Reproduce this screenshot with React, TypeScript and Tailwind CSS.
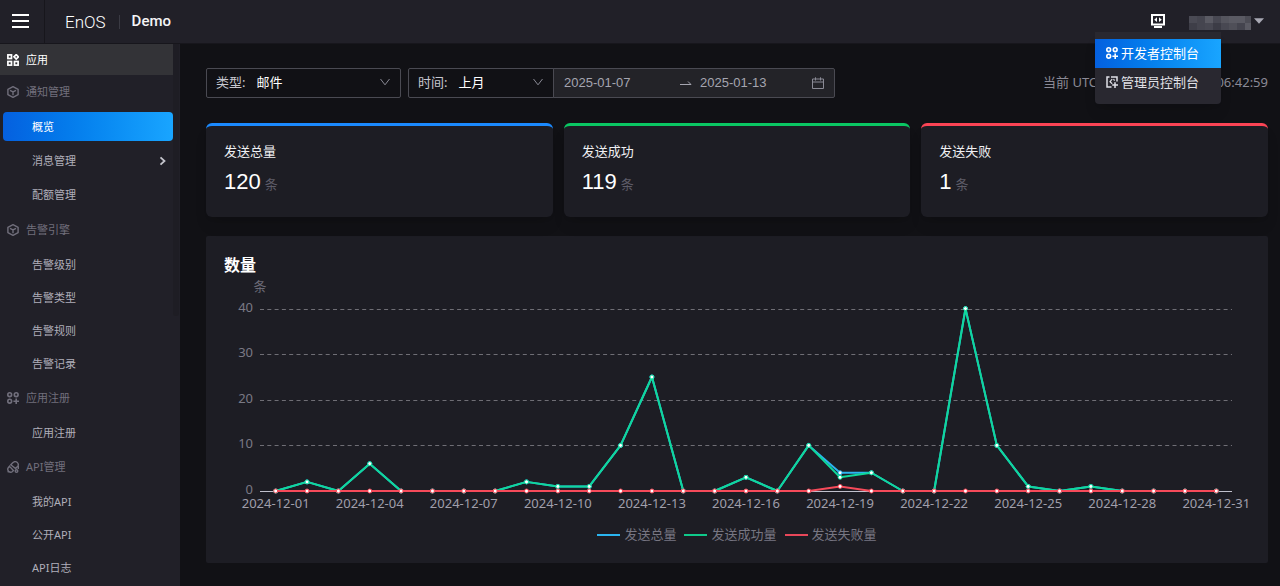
import React from "react";

type IconProps = { className?: string };

const GridIcon = ({ className }: IconProps) => (
  <svg className={className} viewBox="0 0 12 12" fill="none" stroke="currentColor" strokeWidth="1.7">
    <rect x="0.9" y="0.9" width="3.6" height="3.6" />
    <rect x="0.9" y="7.5" width="3.6" height="3.6" />
    <rect x="7.5" y="7.5" width="3.6" height="3.6" />
    <path d="M9.2 0.6 11.4 2.8 9.2 5 7 2.8Z" />
  </svg>
);

const CubeIcon = ({ className }: IconProps) => (
  <svg className={className} viewBox="0 0 12 12" fill="none" stroke="currentColor" strokeWidth="1.4" strokeLinejoin="round">
    <path d="M6 0.7 11.1 3.3V8.7L6 11.3 0.9 8.7V3.3Z" />
    <path d="M3 4.3 6 5.9 9 4.3M6 5.9V9.2" />
  </svg>
);

const AppsAddIcon = ({ className }: IconProps) => (
  <svg className={className} viewBox="0 0 12 12" fill="none" stroke="currentColor" strokeWidth="1.6">
    <circle cx="2.7" cy="2.7" r="1.9" />
    <circle cx="9.2" cy="2.7" r="1.9" />
    <circle cx="2.7" cy="9.2" r="1.9" />
    <path d="M9.2 6.4V12M6.4 9.2H12" />
  </svg>
);

const ApiIcon = ({ className }: IconProps) => (
  <svg className={className} viewBox="0 0 12 12" fill="none" stroke="currentColor" strokeWidth="1.4">
    <path d="M3.8 3.8 6 1.600C7.200 .5 9.200 .5 10.400 1.600 11.500 2.800 11.500 4.400 10.500 5.600L8.600 7.500Z" />
    <path d="M3.200 4.600 1.600 6.200C.5 7.400 .6 9 1.600 10.200 2.700 11.300 4.400 11.400 5.500 10.500L6.400 9.600 2.600 5.400" />
    <path d="M.7 11.300 1.800 10.200" />
    <circle cx="9.500" cy="10" r="1.300" />
    <path d="M11.300 5V8" />
  </svg>
);

const AdminIcon = ({ className }: IconProps) => (
  <svg className={className} viewBox="0 0 12 12" fill="none" stroke="currentColor" strokeWidth="1.5">
    <path d="M3.500 1H1V11H5.500M5 1H11V5.500" />
    <path d="M6.200 3 4 5.800 6.200 7.800M7.500 3.200 8.600 4.600" strokeWidth="1.200" />
    <path d="M9 6.200V12M6.200 9.100H12" />
  </svg>
);

const ConsoleIcon = ({ className }: IconProps) => (
  <svg className={className} viewBox="0 0 14 14" fill="none" stroke="currentColor" strokeWidth="2">
    <rect x="1" y="1" width="12" height="9.500" />
    <path d="M6 3.300 3.200 5.700 6 8.100ZM8 3.300 10.800 5.700 8 8.100Z" fill="currentColor" stroke="none" />
    <path d="M3 13H11" />
  </svg>
);

const Chevron = () => (
  <svg className="pointer-events-none h-2 w-2.5 shrink-0 text-[#8a8a95]" viewBox="0 0 10 8" fill="none" stroke="currentColor">
    <path d="M.5 1 5 6.800 9.500 1" />
  </svg>
);

const MASK = [
  ["#4a4a54", "#45454f", "#5a5a63", "#484852", "#55555e", "#5a5a63", "#5a5a63", "#4c4c55"],
  ["#3e3e48", "#45454f", "#484852", "#3c3c46", "#484852", "#4f4f58", "#44444e", "#5a5a63"],
];

const Header = () => (
  <header className="relative z-10 flex h-11 shrink-0 items-center border-b border-[#17161c] bg-[#212028]">
    <button aria-label="菜单" className="flex h-full w-[45px] items-center border-r border-[#17161c] pb-0.5 pl-3">
      <svg className="h-4 w-[18px]" viewBox="0 0 18 16" stroke="#fff" strokeWidth="2">
        <path d="M0 2H17M0 8H17M0 14H17" />
      </svg>
    </button>
    <span className="ml-5 font-[Roboto] text-[17px] leading-5 font-light text-white">EnOS</span>
    <span className="mr-3 ml-[13px] h-[14px] w-px bg-[#3a3a43]" />
    <span className="pb-0.5 font-[Roboto] text-[15px] leading-5 font-medium text-[#f4f4f6]">Demo</span>
    <div className="relative ml-auto flex h-full items-center">
      <button aria-label="控制台" className="flex h-full items-center px-px pb-0.5">
        <ConsoleIcon className="h-[14px] w-[14px] text-white" />
      </button>
      <nav className="absolute top-8 left-1/2 w-[126px] -translate-x-1/2 rounded-b-sm bg-[#292830] py-[7px] text-[13px] leading-[18px] text-[#e0e0e6] shadow-lg">
        <a href="#developer" className="flex h-[29px] items-center gap-[3px] bg-linear-to-r from-[#0560df] to-[#19a5ff] pb-0.5 pl-[11px] whitespace-nowrap text-white">
          <AppsAddIcon className="h-3 w-3" />
          开发者控制台
        </a>
        <a href="#admin" className="flex h-[29px] items-center gap-[3px] pb-0.5 pl-[11px] whitespace-nowrap">
          <AdminIcon className="h-3 w-3" />
          管理员控制台
        </a>
      </nav>
    </div>
    <button aria-label="用户" className="mr-4 ml-[23px] flex h-full items-center gap-[3px]">
      <svg className="mt-0.5 h-[14px] w-[62px]" viewBox="0 0 62 14" shapeRendering="crispEdges">
        {MASK.map((row, r) => row.map((c, i) => <rect key={`${r}-${i}`} x={i * 8} y={r * 7} width="8" height="7" fill={c} />))}
      </svg>
      <svg className="mb-0.5 h-1.5 w-2.5" viewBox="0 0 10 6" fill="#a9a9b4">
        <path d="M0 .3H10L5 5.800Z" />
      </svg>
    </button>
  </header>
);

const Heading = ({ icon: Icon, children, first }: { icon: React.FC<IconProps>; children: string; first?: boolean }) => (
  <div className={`flex items-center gap-[7px] pl-[7px] text-[#716f7c] ${first ? "h-[34px]" : "h-9"}`}>
    <Icon className="h-3 w-3" />
    {children}
  </div>
);

const Item = ({ children, active, more }: { children: string; active?: boolean; more?: boolean }) => (
  <a
    href="#"
    className={`my-0.5 ml-[3px] flex h-[29px] items-center justify-between rounded-sm pr-[7px] pl-[29px] ${
      active ? "bg-linear-to-r from-[#0560df] to-[#19a5ff] text-white" : "text-[#b0afba]"
    }`}
  >
    {children}
    {more && (
      <svg className="h-2.5 w-[7px]" viewBox="0 0 7 10" fill="none" stroke="#c4c4cc" strokeWidth="1.800">
        <path d="M1.500 1.300 5.500 5 1.500 8.700" />
      </svg>
    )}
  </a>
);

const Sidebar = () => (
  <aside className="flex w-[180px] shrink-0 bg-[#212028]">
    <nav className="flex-1 text-[11px] leading-4">
      <a href="#apps" className="flex h-[31px] items-center gap-[7px] bg-[#333337] pl-[7px] text-white">
        <GridIcon className="h-3 w-3" />
        应用
      </a>
      <Heading icon={CubeIcon} first>通知管理</Heading>
      <div className="flex flex-col gap-px py-px">
        <Item active>概览</Item>
        <Item more>消息管理</Item>
        <Item>配额管理</Item>
      </div>
      <Heading icon={CubeIcon}>告警引擎</Heading>
      <div className="flex flex-col">
        <Item>告警级别</Item>
        <Item>告警类型</Item>
        <Item>告警规则</Item>
        <Item>告警记录</Item>
      </div>
      <Heading icon={AppsAddIcon}>应用注册</Heading>
      <div className="flex flex-col">
        <Item>应用注册</Item>
      </div>
      <Heading icon={ApiIcon}>API管理</Heading>
      <div className="flex flex-col">
        <Item>我的API</Item>
        <Item>公开API</Item>
        <Item>API日志</Item>
      </div>
    </nav>
    <div className="w-[7px]">
      <div className="h-[272px] w-1.5 rounded-b bg-[#1e1d24]" />
    </div>
  </aside>
);

const Filters = () => (
  <div className="flex h-[30px] items-stretch text-[13px] leading-[18px]">
    <label className="flex w-[195px] items-center rounded-xs border border-[#4a4a52] pr-[10px] pb-0.5 pl-[9px] text-[#c8c8d0]">
      类型:
      <select className="ml-[11px] min-w-0 flex-1 appearance-none bg-transparent text-white">
        <option>邮件</option>
      </select>
      <Chevron />
    </label>
    <label className="ml-[7px] flex w-[146px] items-center rounded-l-xs border border-[#4a4a52] pr-[10px] pb-0.5 pl-[9px] text-[#c8c8d0]">
      时间:
      <select className="ml-[11px] min-w-0 flex-1 appearance-none bg-transparent text-white">
        <option>上月</option>
      </select>
      <Chevron />
    </label>
    <div className="-ml-px flex w-[282px] items-center rounded-r-xs border border-[#4a4a52] bg-[#232328] px-[10px] font-['Liberation_Sans'] text-[#a5a5b0]">
      <input aria-label="开始日期" defaultValue="2025-01-07" className="w-[116px] bg-transparent" />
      <svg className="h-2 w-3 shrink-0" viewBox="0 0 12 8" fill="none" stroke="currentColor">
        <path d="M0 5.500H11L8 2.500" />
      </svg>
      <input aria-label="结束日期" defaultValue="2025-01-13" className="ml-2 w-20 bg-transparent" />
      <svg className="ml-auto h-3 w-3 shrink-0" viewBox="0 0 12 12" fill="none" stroke="#8a8a95">
        <path d="M.5 2H11.500V11.500H.5ZM.5 5H11.500M3.500 .3V3.500M8.500 .3V3.500" />
      </svg>
    </div>
    <p className="ml-auto flex w-[225px] items-center justify-between pb-0.5 whitespace-nowrap text-[#8b8a96]">
      <span>当前 UTC</span>
      <time>06:42:59</time>
    </p>
  </div>
);

const Stat = ({ title, value, border }: { title: string; value: string; border: string }) => (
  <section className={`h-[94px] rounded-md border-t-[3px] bg-[#1d1d24] px-[18px] pt-[15px] shadow-lg ${border}`}>
    <h3 className="text-[13px] leading-5 text-[#f0f0f3]">{title}</h3>
    <p className="mt-[7px] flex items-baseline gap-1 leading-7">
      <span className="font-['Liberation_Sans'] text-[22px] text-white">{value}</span>
      <span className="text-[13px] text-[#5d5c68]">条</span>
    </p>
  </section>
);

const success = [0, 2, 0, 6, 0, 0, 0, 0, 2, 1, 1, 10, 25, 0, 0, 3, 0, 10, 3, 4, 0, 0, 40, 10, 1, 0, 1, 0, 0, 0, 0];
const failed = success.map((_, i) => (i === 18 ? 1 : 0));
const total = success.map((v, i) => v + failed[i]);

const SERIES = [
  { name: "发送总量", color: "#2bb5f0", data: total },
  { name: "发送成功量", color: "#0fd89b", data: success },
  { name: "发送失败量", color: "#f64a5a", data: failed },
];

const LEFT = 54;
const RIGHT = 1026;
const BASE = 214;
const STEP = (RIGHT - LEFT) / 31;
const px = (i: number) => LEFT + STEP * (i + 0.5);
const py = (v: number) => BASE - v * 4.56;

const Chart = () => (
  <svg className="block h-auto w-full text-[13px]" viewBox="0 0 1062 236" role="img" aria-label="数量">
    <text x="54" y="14" textAnchor="middle" fill="#6b6a76">条</text>
    {[0, 10, 20, 30, 40].map((v) => (
      <g key={v}>
        <text x="47" y={py(v) + 3} textAnchor="end" fill="#7a7985">{v}</text>
        {v > 0 && <path d={`M${LEFT} ${Math.round(py(v)) + 0.5}H${RIGHT}`} stroke="#6f6e75" strokeDasharray="4 3.3" />}
      </g>
    ))}
    <path d={`M${LEFT} ${BASE + 0.5}H${RIGHT}`} stroke="#c0c0cc" />
    {SERIES.map((s) => (
      <g key={s.name} stroke={s.color}>
        <polyline points={s.data.map((v, i) => `${px(i)},${py(v)}`).join(" ")} fill="none" strokeWidth="2" strokeLinejoin="bevel" />
        {s.data.map((v, i) => (
          <circle key={i} cx={px(i)} cy={py(v)} r="2" fill="#fff" strokeWidth="1" />
        ))}
      </g>
    ))}
    {Array.from({ length: 11 }, (_, k) => k * 3).map((i) => (
      <text key={i} x={px(i)} y="231" textAnchor="middle" fill="#a09fab">
        {`2024-12-${String(i + 1).padStart(2, "0")}`}
      </text>
    ))}
  </svg>
);

const LEGEND_LINES = ["bg-[#2bb5f0]", "bg-[#0fc98a]", "bg-[#e8475a]"];

export default function App() {
  return (
    <div className="flex min-h-screen flex-col bg-[#111115] font-['Noto_Sans','Noto_Sans_CJK_SC',sans-serif]">
      <Header />
      <div className="flex flex-1">
        <Sidebar />
        <main className="min-w-0 flex-1 pt-6 pr-3 pb-5 pl-[26px]">
          <Filters />
          <div className="mt-[25px] grid grid-cols-3 gap-[11px]">
            <Stat title="发送总量" value="120" border="border-[#1b8aff]" />
            <Stat title="发送成功" value="119" border="border-[#0ac763]" />
            <Stat title="发送失败" value="1" border="border-[#fb4455]" />
          </div>
          <section className="mt-[19px] rounded-xs bg-[#1d1d24] pt-[17px] pb-[19px]">
            <h2 className="px-[18px] text-base leading-6 font-bold text-white">数量</h2>
            <Chart />
            <ul className="mt-[11px] flex justify-center gap-2 text-[13px] leading-5 text-[#777682]">
              {SERIES.map((s, i) => (
                <li key={s.name} className="flex items-center gap-1">
                  <span className={`mt-0.5 h-0.5 w-[23px] ${LEGEND_LINES[i]}`} />
                  {s.name}
                </li>
              ))}
            </ul>
          </section>
        </main>
      </div>
    </div>
  );
}
